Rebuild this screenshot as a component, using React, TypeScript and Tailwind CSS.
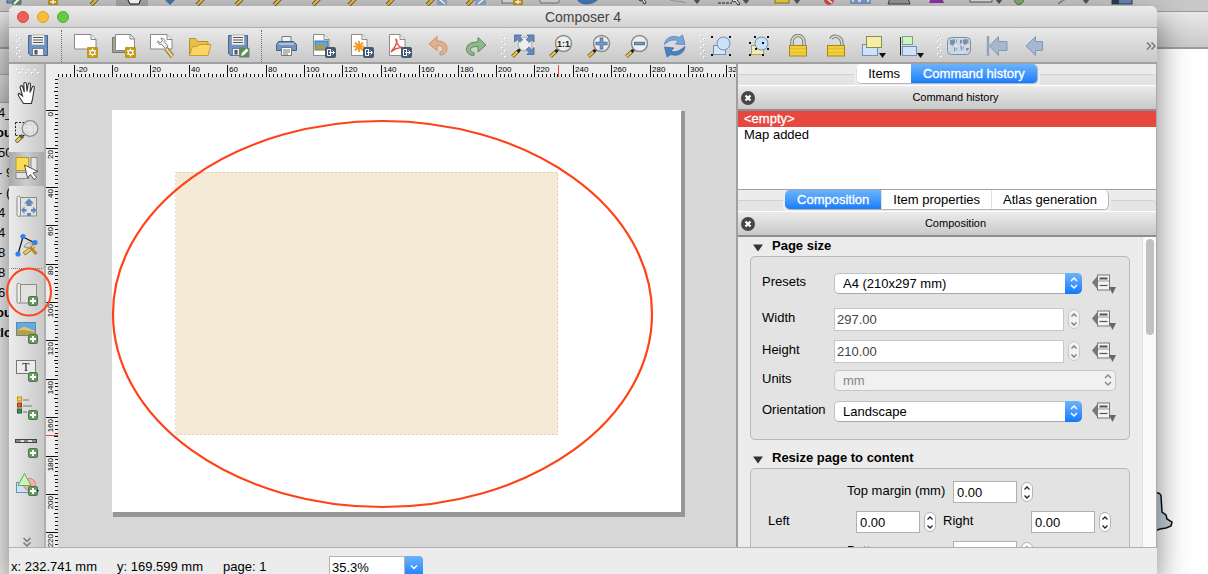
import React, { useState } from "react";

type Kids = { children?: React.ReactNode };

const Svg = ({ children }: Kids) => (
  <svg viewBox="0 0 24 24" className="h-6 w-6 shrink-0" aria-hidden="true">
    {children}
  </svg>
);

/* ---------- shared icon parts ---------- */
const Floppy = () => (
  <g>
    <path d="M2.5 1.5h19v20H4.500l-2-2z" fill="#6f93c3" stroke="#46628c" />
    <rect x="5.500" y="1" width="13" height="10" fill="#f4f4f2" stroke="#8a8a8a" strokeWidth=".6" />
    <path d="M7 3.500h10M7 6h10M7 8.500h10" stroke="#555" />
    <rect x="6.500" y="14.500" width="11" height="7" fill="#f1f1f1" stroke="#666" strokeWidth=".7" />
    <rect x="8.500" y="16" width="3" height="4.500" fill="#3c5a88" />
  </g>
);
const Star = () => (
  <g>
    <rect x="13" y="13" width="11" height="11" rx="1" fill="#c39a17" />
    <path d="M18.500 14.500v8M15 16.500l7 4M22 16.500l-7 4" stroke="#fff" strokeWidth="1.300" />
    <circle cx="18.500" cy="18.500" r="2.200" fill="#c39a17" stroke="#fff" strokeWidth="1.200" />
  </g>
);
const Plus = () => (
  <g>
    <rect x="13.500" y="14.500" width="9" height="9" rx="1.500" fill="#6a9a64" stroke="#4b7749" />
    <path d="M18 16v6M15 19h6" stroke="#fff" strokeWidth="2" />
  </g>
);
const ExportBadge = () => (
  <g>
    <rect x="13" y="13" width="11" height="11" rx="2" fill="#425a73" />
    <path d="M18.500 15.500h-3v6h3M17 18.500h5.500M20.500 16.500l2 2-2 2M18.500 15v7" stroke="#fff" fill="none" />
  </g>
);
const Doc = ({ children }: Kids) => (
  <Svg>
    <path d="M1.500.500h10.500l5 5v16H1.500z" fill="#fff" stroke="#8c8c8c" />
    <path d="M12 .500v5h5" fill="#eee" stroke="#8c8c8c" />
    {children}
    <ExportBadge />
  </Svg>
);
const Handle = () => (
  <g>
    <path d="M1.500 22.500l6.500-6" stroke="#55451a" strokeWidth="3.600" />
    <path d="M1.500 22.500l5-4.600" stroke="#f3c545" strokeWidth="2.200" />
    <path d="M6.500 17.800l3-2.800" stroke="#222" strokeWidth="2.600" />
  </g>
);
const Lens = ({ children }: Kids) => (
  <Svg>
    <Handle />
    <circle cx="14.500" cy="9.500" r="8" fill="#eeeeec" stroke="#8b8b8b" strokeWidth="1.500" />
    {children}
  </Svg>
);

/* ---------- main toolbar icons ---------- */
const Save = () => <Svg><Floppy /></Svg>;
const SaveAs = () => (
  <Svg>
    <Floppy />
    <rect x="13" y="13.500" width="10.500" height="10" rx="1.500" fill="#5d8a5b" />
    <path d="M15 22l1-3 4.500-4.500 2 2L18 21z" fill="#fff" />
  </Svg>
);
const NewPage = () => (
  <Svg>
    <path d="M.500.500h16.500l5 5v9.500H.500z" fill="#fff" stroke="#888" />
    <path d="M17 .500v5h5" fill="#eee" stroke="#888" />
    <Star />
  </Svg>
);
const Duplicate = () => (
  <Svg>
    <path d="M.500 3.500h3v13h14v2H.500z" fill="#a5a398" stroke="#77756d" />
    <path d="M3.500.500h15l4 4v12h-19z" fill="#fff" stroke="#888" />
    <path d="M18 .500v4.500h4.500" fill="#eee" stroke="#888" />
    <Star />
  </Svg>
);
const Manager = () => (
  <Svg>
    <path d="M.500.500h16.500l5 5v9.500H.500z" fill="#fff" stroke="#888" />
    <path d="M17 .500v5h5" fill="#eee" stroke="#888" />
    <path d="M16 14.500l6.500 8" stroke="#8c7131" strokeWidth="4.400" />
    <path d="M16 14.500l6.500 8" stroke="#ecd28a" strokeWidth="2.600" />
    <path d="M15.500 14.500l-4-4c-2 .6-4-1.200-3.800-3.500l2.500 1.800 2.200-2-1.500-2.500c2.800-.4 4.800 1.800 4 4.200l3.300 3.500z" fill="#eee" stroke="#777" strokeWidth=".9" />
  </Svg>
);
const Folder = () => (
  <Svg>
    <path d="M1.500 21V4.500h6l2 3h10.500V21z" fill="#e8bf49" stroke="#b9902b" />
    <path d="M1.500 21.500l3-9h5l1.500-2h12l-3 11z" fill="#fad765" stroke="#c79b30" />
  </Svg>
);
const Printer = () => (
  <Svg>
    <path d="M8 2.500h9v7H8z" fill="#f2f2f2" stroke="#777" />
    <path d="M4.500 7.500h15l3 3v6h-20v-6z" fill="#7195c3" stroke="#44618a" />
    <path d="M5 10h15" stroke="#a9c2e3" strokeWidth="2" />
    <path d="M7.500 13.500h10v8h-10z" fill="#fff" stroke="#777" />
    <path d="M9 16h7M9 18h7M9 20h5" stroke="#777" />
  </Svg>
);
const ImageOut = () => (
  <Doc>
    <rect x="3" y="7" width="13" height="9" fill="#5aa5e8" stroke="#54718d" />
    <path d="M3.500 15.500v-3l5-2 7 3v2z" fill="#b89b2f" />
  </Doc>
);
const SvgOut = () => (
  <Doc>
    <path d="M9 7v11M3.500 12.500h11M5 8.500l8 8M13 8.500l-8 8" stroke="#f69b24" strokeWidth="1.900" />
  </Doc>
);
const PdfOut = () => (
  <Doc>
    <path d="M8 5.500c2 1 .5 6-5 12.500 3-3 7-4.500 12-4.500-3 1-7-4-7-8z" fill="none" stroke="#dc5448" strokeWidth="1.500" />
  </Doc>
);
const Undo = () => (
  <Svg>
    <path d="M3 10l8-7.500v4.500c7 0 10 3 10 7.500 0 4-3 6.500-7 6.500v-3c2 0 3-1.500 3-3.200 0-2-2-3.300-6-3.300v5z" fill="#e2b08c" stroke="#c99372" />
  </Svg>
);
const Redo = () => (
  <Svg>
    <path d="M22 11l-8-7.500v4.500c-8 0-11.500 3-11.500 7.200 0 4 3.500 6.300 7.500 6.300v-3c-2 0-3.500-1-3.500-3 0-2 2.500-3 7.500-3v5.500z" fill="#8fb98a" stroke="#588a58" />
  </Svg>
);
const ZoomFull = () => (
  <Svg>
    <Handle />
    <circle cx="14" cy="10" r="7" fill="#e8e8e8" stroke="#aaa" />
    <path d="M3.500 1h7L8.800 3l3 3-2.500 2.500-3-3-2.800 2.500zM23 1v7l-2.500-2-3 3L15 6l3-3-2-2zM23 20.500h-7l2-2.200-3-3 2.500-2.500 3 3 2.500-2.300z" fill="#648bbd" stroke="#456893" strokeWidth=".8" />
    <circle cx="13.500" cy="10.500" r="4.500" fill="#eee" />
  </Svg>
);
const ZoomActual = () => (
  <Lens>
    <text x="14.500" y="13" textAnchor="middle" fontSize="9" fontWeight="700" fill="#222">1:1</text>
  </Lens>
);
const ZoomIn = () => (
  <Lens>
    <path d="M14.500 3.500v12M8.500 9.500h12" stroke="#46699b" strokeWidth="3.600" />
    <path d="M14.500 4.200v10.600M9.200 9.500h10.600" stroke="#759bcb" strokeWidth="2" />
  </Lens>
);
const ZoomOut = () => (
  <Lens>
    <path d="M9 9.500h11" stroke="#46699b" strokeWidth="3.400" />
    <path d="M9.700 9.500h9.600" stroke="#759bcb" strokeWidth="1.800" />
  </Lens>
);
const Refresh = () => (
  <Svg>
    <path d="M1.500 10.500C2 4 9 .500 16 3.500L19.500 1l2.500 9.500-9.500-.5 3-3C10 5 6.500 6 1.500 10.500z" fill="#7ba6d8" stroke="#5582b8" strokeWidth=".8" />
    <path d="M22 12.500C21.500 19 15 23 8 20.500l-4 2.500-2.500-10 9.500 1-3 3c5 2 9-.500 14-4.500z" fill="#4a7fc0" stroke="#3f6ea8" strokeWidth=".8" />
  </Svg>
);
const Corners = () => (
  <path d="M1 2h2v2H1zM19 2h2v2h-2zM1 20h2v2H1zM19 20h2v2h-2z" fill="#111" />
);
const Group = () => (
  <Svg>
    <rect x="3.500" y="11.500" width="12" height="9" fill="#d3e6f8" stroke="#6d91b4" />
    <circle cx="13.500" cy="9.500" r="6.500" fill="#cbe1f7" stroke="#6d91b4" />
    <Corners />
  </Svg>
);
const Ungroup = () => (
  <Svg>
    <rect x="3.500" y="11.500" width="12" height="9" fill="#f3efaa" stroke="#a8a26a" />
    <circle cx="13.500" cy="9.500" r="6.500" fill="#cbe1f7" stroke="#6d91b4" />
    <path d="M6 2h2v2H6zM19 2h2v2h-2zM1 8h2v2H1zM1 20h2v2H1zM14 20h2v2h-2zM19 14h2v2h-2zM7 14h2v2H7zM14 8h2v2h-2z" fill="#111" />
  </Svg>
);
const Lock = () => (
  <Svg>
    <path d="M6 11V8a6 6.500 0 0 1 12 0v3" fill="none" stroke="#7d7d78" strokeWidth="3.600" />
    <path d="M6 11V8a6 6.500 0 0 1 12 0v3" fill="none" stroke="#d9d9d4" strokeWidth="1.600" />
    <rect x="3.500" y="11.500" width="17" height="10.500" fill="#efcf39" stroke="#ab861b" />
    <path d="M4 14.500h16M4 18.500h16" stroke="#e3bd29" />
  </Svg>
);
const Unlock = () => (
  <Svg>
    <path d="M7 5c1-3 5-3.500 8-1.500 3 2 3 5 3 7.500" fill="none" stroke="#7d7d78" strokeWidth="3.600" />
    <path d="M7 5c1-3 5-3.500 8-1.500 3 2 3 5 3 7.500" fill="none" stroke="#d9d9d4" strokeWidth="1.600" />
    <rect x="3.500" y="11.500" width="17" height="10.500" fill="#efcf39" stroke="#ab861b" />
    <path d="M4 14.500h16M4 18.500h16" stroke="#e3bd29" />
  </Svg>
);
const Raise = () => (
  <Svg>
    <rect x=".500" y="10.500" width="15" height="11" fill="#cfe4f9" stroke="#6d91b4" />
    <rect x="4.500" y="2.500" width="15" height="11" fill="#f3efa5" stroke="#8f8b55" />
    <path d="M17 19h7l-3.500 5z" fill="#111" />
  </Svg>
);
const Align = () => (
  <Svg>
    <path d="M.500 3v18.500" stroke="#222" />
    <rect x="2.500" y="2.500" width="10" height="8" fill="#cdf3c6" stroke="#7ba576" />
    <rect x="2.500" y="12.500" width="14" height="9" fill="#cfe4f9" stroke="#6d91b4" />
    <path d="M17 19h7l-3.500 5z" fill="#111" />
  </Svg>
);
const Atlas = () => (
  <Svg>
    <rect x=".500" y="3.500" width="23" height="17" rx="4" fill="#cad7e5" stroke="#7b8da2" />
    <path d="M3 6l6-1 1 3-3 2-1 3-3-3zM7 13l3 1-1 4-2-1zM13 6l7-1 2 3-4 3-3-2-2 1zM13 11l4 1-1 5-2-1zM19 14l3 0-1 3-2-1z" fill="#7d91a8" />
    <path d="M8.500 4v16M15.500 4v16M1 12h22" stroke="#e6edf3" strokeWidth=".7" />
  </Svg>
);
const First = () => (
  <Svg>
    <path d="M3 2v20" stroke="#8fa3bf" strokeWidth="2.400" />
    <path d="M4.500 12l9-9.500v5H22v9h-8.500v5z" fill="#a5b8d0" stroke="#8297b4" />
  </Svg>
);
const Prev = () => (
  <Svg>
    <path d="M3 12l9.500-9.500v5h7v9h-7v5z" fill="#a5b8d0" stroke="#8297b4" />
  </Svg>
);

/* ---------- side toolbar icons ---------- */
const Hand = () => (
  <Svg>
    <path d="M8.500 22.500L4 15.500C2.200 13 3.500 11.500 5.200 13L7.500 15 5.200 6.500C4.800 4.500 7 4 7.700 5.800L9.300 11 8.800 3c0-2 2.400-2.100 2.600-.200L12 10.500l1.200-7.300c.3-1.800 2.500-1.500 2.300.4L15 11.500l2.200-5.300c.7-1.600 2.500-1 2.100.8L18 15c-.2 3-1.200 5-1.500 7.500z" fill="#fff" stroke="#333" strokeWidth="1.100" />
  </Svg>
);
const ZoomTool = () => (
  <Svg>
    <path d="M.500 3.500h12M.500 3.500v13M.500 16.500h12" stroke="#222" strokeDasharray="2 1.500" fill="none" />
    <path d="M1 23l7-6.500" stroke="#6f5d2a" strokeWidth="3.800" />
    <path d="M1.500 22.500l4-3.700" stroke="#f3cf71" strokeWidth="2.200" />
    <circle cx="15" cy="9.500" r="7.800" fill="#e4e4e2" stroke="#8b8b8b" strokeWidth="1.300" />
    <path d="M11 5h7.500v9H11z" fill="none" stroke="#c4c4c4" strokeDasharray="2 1.500" />
  </Svg>
);
const Select = () => (
  <Svg>
    <rect x="1" y=".500" width="12.500" height="13" fill="#fbdc52" stroke="#b99a25" />
    <rect x="16" y=".500" width="6" height="13" fill="#e5e5e5" stroke="#8b8b8b" />
    <rect x="1" y="15.500" width="12.500" height="6" fill="#e5e5e5" stroke="#8b8b8b" />
    <path d="M9.500 8l13.500 6.500-5 1.500 3.500 4.500-2.500 2-3.500-5-3 3.500z" fill="#fff" stroke="#444" strokeWidth=".9" />
  </Svg>
);
const Sheet = () => (
  <g>
    <path d="M4 2.500h17.500v18.500H4z" fill="#e1e1df" stroke="#8a8a88" />
    <path d="M2 20V2.500C2 .800 5.500.800 5.500 2.500V19c0 3-3.500 3-3.500 1z" fill="#ececea" stroke="#8a8a88" />
  </g>
);
const MoveContent = () => (
  <Svg>
    <Sheet />
    <path d="M14 3.500l5 5h-2.500v2.500h-5V8.500H9zM6 15l3.500-3.500V14h2v2.500h-2V19zM21.500 15L18 11.500V14h-2v2.500h2V19zM12 18h4v3h-4z" fill="#6288b8" />
  </Svg>
);
const Nodes = () => (
  <Svg>
    <path d="M3 21L8 4l12 6" fill="none" stroke="#111" strokeWidth="1.200" />
    <path d="M9 21l10-8" stroke="#8f6e1e" strokeWidth="4" />
    <path d="M9.500 20.500L19 13" stroke="#f7cf48" strokeWidth="2.400" />
    <path d="M13 12l8.500 9" stroke="#b7882b" strokeWidth="3" />
    <path d="M9 14c2-5 6-5 9-3l-3 4z" fill="#d3d3cf" stroke="#777" strokeWidth=".7" />
    <circle cx="3" cy="21" r="2.600" fill="#2f80f2" />
    <circle cx="8" cy="3.500" r="2.600" fill="#2f80f2" />
    <circle cx="20" cy="9.500" r="2.600" fill="#2f80f2" />
  </Svg>
);
const AddMap = () => <Svg><Sheet /><Plus /></Svg>;
const AddImage = () => (
  <Svg>
    <rect x="1.500" y="2.500" width="19" height="13" fill="#5fa9ee" stroke="#6d8595" />
    <path d="M2 15v-4.500l7-4 11 4.500v4z" fill="#b6a047" />
    <path d="M2 10.500l7-4 11 4.500v1l-11-2z" fill="#d9c878" />
    <Plus />
  </Svg>
);
const AddLabel = () => (
  <Svg>
    <rect x="1.500" y="2.500" width="19" height="13" fill="#ebebeb" stroke="#777" />
    <text x="11" y="13" textAnchor="middle" fontSize="12" fontFamily="Liberation Serif, serif" fill="#222">T</text>
    <Plus />
  </Svg>
);
const AddLegend = () => (
  <Svg>
    <rect x="2.500" y="1" width="4" height="4" fill="#fbd43c" stroke="#c28a17" />
    <rect x="2.500" y="7" width="4" height="4" fill="#e25b2b" stroke="#9d3717" />
    <rect x="2.500" y="13" width="4" height="4" fill="#3f9558" stroke="#1e5a30" />
    <path d="M8 4h6M8 10h9M8 16h4" stroke="#999" strokeWidth="1.500" />
    <Plus />
  </Svg>
);
const AddScale = () => (
  <Svg>
    <rect x=".500" y="5.500" width="21" height="3" fill="#ddd" stroke="#444" />
    <path d="M1 7h4.500M9 7h4M17 7h4" stroke="#888" strokeWidth="2" />
    <Plus />
  </Svg>
);
const AddShape = () => (
  <Svg>
    <rect x="1.500" y="10.500" width="13" height="10" fill="#cde2f7" stroke="#6d91b4" />
    <circle cx="14.500" cy="12.500" r="6" fill="#f2b1ab" stroke="#c98682" />
    <path d="M9.500 1.500l6.500 12H3z" fill="#cdf3bd" stroke="#6fa35f" />
    <Plus />
    <path d="M22 18h2l-1 2z" fill="#111" />
  </Svg>
);

type Tool = { name: string; icon: () => React.ReactElement };
const groups: { lead: "grip" | "line"; tools: Tool[] }[] = [
  { lead: "grip", tools: [{ name: "Save project", icon: Save }] },
  {
    lead: "line",
    tools: [
      { name: "New composer", icon: NewPage },
      { name: "Duplicate composer", icon: Duplicate },
      { name: "Composer manager", icon: Manager },
      { name: "Add items from template", icon: Folder },
      { name: "Save as template", icon: SaveAs },
    ],
  },
  {
    lead: "line",
    tools: [
      { name: "Print", icon: Printer },
      { name: "Export as image", icon: ImageOut },
      { name: "Export as SVG", icon: SvgOut },
      { name: "Export as PDF", icon: PdfOut },
      { name: "Undo", icon: Undo },
      { name: "Redo", icon: Redo },
    ],
  },
  {
    lead: "grip",
    tools: [
      { name: "Zoom full", icon: ZoomFull },
      { name: "Zoom to 100%", icon: ZoomActual },
      { name: "Zoom in", icon: ZoomIn },
      { name: "Zoom out", icon: ZoomOut },
      { name: "Refresh view", icon: Refresh },
    ],
  },
  {
    lead: "grip",
    tools: [
      { name: "Group items", icon: Group },
      { name: "Ungroup items", icon: Ungroup },
      { name: "Lock selected items", icon: Lock },
      { name: "Unlock all items", icon: Unlock },
      { name: "Raise selected items", icon: Raise },
      { name: "Align selected items", icon: Align },
    ],
  },
  {
    lead: "grip",
    tools: [
      { name: "Preview atlas", icon: Atlas },
      { name: "First feature", icon: First },
      { name: "Previous feature", icon: Prev },
    ],
  },
];

const viewTools: Tool[] = [
  { name: "Pan", icon: Hand },
  { name: "Zoom", icon: ZoomTool },
  { name: "Select/Move item", icon: Select },
  { name: "Move item content", icon: MoveContent },
  { name: "Edit nodes", icon: Nodes },
];
const addTools: Tool[] = [
  { name: "Add new map", icon: AddMap },
  { name: "Add image", icon: AddImage },
  { name: "Add new label", icon: AddLabel },
  { name: "Add new legend", icon: AddLegend },
  { name: "Add new scalebar", icon: AddScale },
  { name: "Add shape", icon: AddShape },
];

const Grip = () => (
  <svg className="h-6 w-[9px] shrink-0 overflow-visible" aria-hidden="true">
    {[0, 1, 2, 3, 4, 5, 6, 7].map((i) => (
      <g key={i}>
        <rect x={i % 2 ? 9 : 6} y={1 + i * 3} width="2" height="2" fill="#f6f6f6" />
        <rect x={i % 2 ? 10 : 7} y={2 + i * 3} width="1" height="1" fill="#b2b2b2" />
      </g>
    ))}
  </svg>
);

/* ---------- rulers ---------- */
const MM = 1.92;
const ticks = (from: number, to: number) =>
  Array.from({ length: Math.floor((to - from) / 2) + 1 }, (_, i) => from + i * 2);

const TopRuler = () => (
  <svg className="h-[13px] w-full bg-[#ededed]" aria-hidden="true">
    <g shapeRendering="crispEdges" fill="#111">
      {ticks(-28, 324).map((mm) => {
        const h = mm % 20 === 0 ? 12 : mm % 10 === 0 ? 4 : 3;
        return <rect key={mm} x={Math.round(66 + mm * MM)} y={13 - h} width="1" height={h} />;
      })}
      <rect x="512" y="1" width="1" height="12" fill="#f0433a" />
    </g>
    {ticks(-28, 324).filter((mm) => mm % 20 === 0).map((mm) => (
      <text key={mm} x={Math.round(68 + mm * MM)} y="8" fontSize="8" fill="#000">{mm}</text>
    ))}
  </svg>
);

const SideRuler = () => (
  <svg className="h-full w-3 bg-[#ededed]" aria-hidden="true">
    <g shapeRendering="crispEdges" fill="#111">
      {ticks(-16, 260).map((mm) => {
        const w = mm % 20 === 0 ? 12 : mm % 10 === 0 ? 4 : 3;
        return <rect key={mm} x={12 - w} y={Math.round(33 + mm * MM)} width={w} height="1" />;
      })}
      <rect x="0" y="358" width="12" height="1" fill="#f0433a" />
    </g>
    {ticks(0, 260).filter((mm) => mm % 20 === 0).map((mm) => (
      <text
        key={mm}
        textAnchor="end"
        fontSize="8"
        fill="#000"
        transform={`translate(7 ${Math.round(35 + mm * MM)}) rotate(-90)`}
      >
        {mm}
      </text>
    ))}
  </svg>
);

const Canvas = () => (
  <svg className="h-full w-full bg-[#d7d7d7]" role="img" aria-label="Composition page">
    <rect x="55" y="34" width="572" height="406" fill="#969696" />
    <rect x="54" y="33" width="569" height="402" fill="#fff" />
    <rect x="118" y="95" width="382" height="263" fill="#f5ead6" />
    <rect x="117.500" y="95.500" width="382" height="262" fill="none" stroke="#e9a9a0" strokeDasharray="1 3" />
    <ellipse cx="324.500" cy="237" rx="269.500" ry="193" fill="none" stroke="#ff4217" strokeWidth="2.200" />
  </svg>
);

/* ---------- panel controls ---------- */
const Tabs = ({ items, start }: { items: string[]; start: number }) => {
  const [on, setOn] = useState(start);
  return (
    <div className="flex h-[21px] shrink-0 items-start bg-[#ececec]">
      <span className="mt-2.5 h-[11px] flex-1 border-t border-[#d0d0d0] bg-[#e4e4e4]" />
      <div role="tablist" className="mx-0.5 flex h-5 overflow-hidden rounded-[5px] border-b border-r border-[#b5b5b5] bg-white text-[13px]">
        {items.map((t, i) => (
          <button
            key={t}
            role="tab"
            aria-selected={i === on}
            onClick={() => setOn(i)}
            className={
              i === on
                ? "h-5 bg-linear-to-b from-[#6bb3fa] to-[#0a7afe] px-3 leading-5 text-white [-webkit-text-stroke:0.3px_white]"
                : "h-5 border-l border-[#e0e0e0] px-[11px] leading-5 text-black"
            }
          >
            {t}
          </button>
        ))}
      </div>
      <span className="mt-2.5 h-[11px] flex-1 rounded-tr border-t border-[#d0d0d0] bg-[#e4e4e4]" />
    </div>
  );
};

const DockTitle = ({ title }: { title: string }) => (
  <div className="flex h-[26px] shrink-0 items-center border-b-2 border-t border-b-[#8e8e8e] border-t-white bg-linear-to-b from-[#ebebeb] to-[#c9c9c9] pl-[3px]">
    <button aria-label={`Close ${title}`} className="h-3.5 w-3.5 shrink-0">
      <svg viewBox="0 0 14 14" className="h-3.5 w-3.5">
        <circle cx="7" cy="7" r="7" fill="#464646" />
        <path d="M4.500 4.500l5 5M9.500 4.500l-5 5" stroke="#fff" strokeWidth="2.200" />
      </svg>
    </button>
    <h2 className="flex-1 text-center text-[11px] text-black">{title}</h2>
  </div>
);

const Chevrons = ({ color }: { color: string }) => (
  <svg viewBox="0 0 10 14" className="h-3.5 w-2.5" fill="none" stroke={color} strokeWidth="1.500" aria-hidden="true">
    <path d="M2 5l3-3 3 3M2 9l3 3 3-3" />
  </svg>
);

const PopUp = ({ id, options, disabled }: { id: string; options: string[]; disabled?: boolean }) => (
  <div className="relative min-w-0 flex-1">
    <select
      id={id}
      disabled={disabled}
      className={
        disabled
          ? "block h-[21px] w-full appearance-none rounded-[5px] border border-[#c6c6c6] bg-[#f1f1f1] px-2 pb-0.5 text-[13px] text-[#858585] opacity-100"
          : "block h-[21px] w-full appearance-none rounded-[5px] border border-b-[#a8a8a8] border-[#c2c2c2] bg-white px-2 pb-0.5 text-[13px] text-black"
      }
    >
      {options.map((o) => <option key={o}>{o}</option>)}
    </select>
    <span
      className={
        disabled
          ? "pointer-events-none absolute inset-y-0 right-0 flex w-[17px] items-center justify-center"
          : "pointer-events-none absolute inset-y-0 right-0 flex w-[17px] items-center justify-center rounded-r-[5px] bg-linear-to-b from-[#6bb3fa] to-[#0a7afe]"
      }
    >
      <Chevrons color={disabled ? "#8a8a8a" : "#ffffff"} />
    </span>
  </div>
);

const Spinner = ({ name, dim }: { name: string; dim?: boolean }) => (
  <span
    className={
      dim
        ? "ml-1 flex h-5 w-3 shrink-0 flex-col overflow-hidden rounded-md border border-[#c8c8c8] bg-[#f2f2f2] text-[#777]"
        : "ml-1 flex h-5 w-3 shrink-0 flex-col overflow-hidden rounded-md border border-[#b4b4b4] bg-white text-[#222]"
    }
  >
    {["Increase", "Decrease"].map((a, i) => (
      <button key={a} aria-label={`${a} ${name}`} disabled={dim} className="flex flex-1 items-center justify-center">
        <svg viewBox="0 0 8 6" className="h-1.5 w-2" fill="none" stroke="currentColor" strokeWidth="1.300">
          <path d={i ? "M1.500 1.500L4 4l2.500-2.500" : "M1.500 4.500L4 2l2.500 2.500"} />
        </svg>
      </button>
    ))}
  </span>
);

const Override = ({ name }: { name: string }) => (
  <button aria-label={`Data defined override for ${name}`} className="ml-2.5 h-[22px] w-6 shrink-0">
    <svg viewBox="0 0 24 22" className="h-[22px] w-6">
      <path d="M0 10.500l5-6v12z" fill="#777" />
      <rect x="5.500" y="3" width="12" height="15" fill="#f4f4f4" stroke="#777" />
      <path d="M7.500 6.500h8" stroke="#555" strokeWidth="2" />
      <path d="M6 9h11" stroke="#999" />
      <path d="M7.500 13.500h8" stroke="#555" strokeWidth="1.200" />
      <path d="M17 15h7l-3.500 7z" fill="#666" />
    </svg>
  </button>
);

const Row = ({ id, label, gap, children }: Kids & { id: string; label: string; gap: string }) => (
  <div className={`flex h-[22px] items-center ${gap}`}>
    <label htmlFor={id} className="w-[72px] shrink-0 pb-0.5">{label}</label>
    {children}
  </div>
);

const Margin = ({ id, label, wide }: { id: string; label: string; wide?: boolean }) => (
  <div className="flex h-[22px] items-center">
    <label htmlFor={id} className={wide ? "w-[106px] pb-0.5" : "w-[88px] pb-0.5"}>{label}</label>
    <input id={id} defaultValue="0.00" className="h-[22px] w-16 border border-[#b0b0b0] bg-white px-[3px] text-[13px] text-black" />
    <Spinner name={label} />
  </div>
);

const Section = ({ title, children }: Kids & { title: string }) => (
  <section>
    <button className="flex h-[18px] items-center pb-0.5 pl-[3px] font-bold">
      <svg viewBox="0 0 10 8" className="mr-[9px] h-2 w-2.5 translate-y-0.5">
        <path d="M0 .500h10L5 7.500z" fill="#333" />
      </svg>
      {title}
    </button>
    {children}
  </section>
);

/* ---------- the window behind ---------- */
const layerText = ["4_", "ou", "50", "- 9", "- (", "4 -", "4 -", "8 -", "8 -", "6 -", "ou", "tlo"];
const pencils = [94, 200, 239, 277, 316, 352, 390, 430, 470];
const arrows = [697, 746, 797, 999, 1086];

const BackWindow = () => (
  <div className="absolute inset-0 flex flex-col overflow-hidden bg-white" aria-hidden="true">
    <div className="h-3 shrink-0 border-b border-[#9b9b9b] bg-[#c8c8c8]">
      <svg className="h-2 w-full">
        <rect x="7" y="-8" width="14" height="11" fill="#7294bf" stroke="#46628c" />
        <rect x="12" y="-5" width="9" height="10" fill="#5d8a5b" />
        <path d="M14 4l5-5" stroke="#fff" strokeWidth="2" />
        <rect x="48" y="-5" width="10" height="10" fill="#c39a17" />
        <path d="M53-3v7M50 2h6" stroke="#fff" strokeWidth="1.500" />
        <rect x="116" y="0" width="32" height="8" fill="#a9a9a9" />
        <path d="M127-2l3 6h9l2-6z" fill="#fff" stroke="#111" />
        <path d="M165 0h10l-5 5z" fill="#4a74ad" />
        {pencils.map((x) => (
          <g key={x}>
            <path d={`M${x - 3} 5l7-7`} stroke="#6b5520" strokeWidth="4" />
            <path d={`M${x - 3} 5l7-7`} stroke="#efc24c" strokeWidth="2.400" />
          </g>
        ))}
        <path d="M437-4h10v9h-10zM475-4h11v9h-11z" fill="#8fa9cb" />
        <path d="M439-1l6 5M478 4l6-5" stroke="#fff" strokeWidth="1.500" />
        <rect x="502" y="-5" width="14" height="8" fill="#ddd" stroke="#777" />
        <rect x="513" y="-5" width="10" height="10" fill="#c39a17" />
        <path d="M518-3v7M515 2h6" stroke="#fff" strokeWidth="1.500" />
        <rect x="540" y="-5" width="19" height="8" rx="1" fill="#d5d5d5" stroke="#777" />
        <path d="M577 0c4 6 14 6 21 0z" fill="#4478b8" />
        <path d="M638-2l2 3 2-1 2 4 2-1-2-4 3-1z" fill="#fff" stroke="#333" />
        <path d="M670 0c8 2 12 1 16 3" stroke="#999" fill="none" />
        <path d="M718 3h14" stroke="#222" strokeDasharray="3 1" />
        <path d="M731-2l2 4 2-1 3 4 2-1-3-4 3-1z" fill="#fff" stroke="#333" />
        {arrows.map((x) => <path key={x} d={`M${x - 4}-1h8l-4 5z`} fill="#555" />)}
        <rect x="775" y="-5" width="14" height="8" fill="#efcf39" stroke="#8f7a25" />
        <circle cx="829" cy="0" r="5" fill="#d94b45" />
        <path d="M826-2l6 5" stroke="#fff" strokeWidth="1.500" />
        <path d="M851-2v5h19v-5M854 1h4M861 1h6" fill="#d7e6f5" stroke="#5e87ba" strokeWidth="1.400" />
        <path d="M890-2l-2 6h22l-2-6z" fill="#999" stroke="#444" />
        <path d="M931-2l-2 5h15l-2-5z" fill="#8d35a8" />
        <path d="M970-2v4h22v-4" fill="#ddd" stroke="#555" />
        <circle cx="1019" cy="0" r="4.500" fill="#86a96b" stroke="#58784a" />
        <path d="M1058 4l6-6 2 1z" fill="#eee" stroke="#777" />
        <rect x="1112" y="-5" width="20" height="9" fill="#6889b4" stroke="#2c3d55" />
        <rect x="1112" y="-5" width="7" height="9" fill="#2c3d55" />
      </svg>
    </div>
    <div className="h-[37px] shrink-0 border-b-2 border-[#9d9d9d] bg-linear-to-b from-[#e9e9e9] to-[#c9c9c9]" />
    <div className="flex flex-1">
      <div className="w-20 shrink-0 bg-[#f0f0f0] text-[13px] leading-5 text-black">
        <div className="h-[26px] border-b border-[#aaa] bg-linear-to-b from-[#e4e4e4] to-[#cccccc]" />
        <div className="h-7 border-b border-[#aaa] bg-linear-to-b from-[#e4e4e4] to-[#c8c8c8]" />
        {layerText.map((t, i) => (
          <div key={i} className={i === 1 || i > 9 ? "-ml-1 h-5 whitespace-nowrap font-bold" : "-ml-0.5 h-5 whitespace-nowrap"}>
            {t}
          </div>
        ))}
      </div>
      <div className="relative flex-1 bg-white">
        <svg className="absolute right-[33px] top-[443px] h-10 w-5">
          <path d="M0 1c3-1 6 1 6 3l1 16 4 3 1 4 5 3-1 4-5 2-6 1-5 2z" fill="#c8d3e1" stroke="#111" strokeWidth="1.500" />
        </svg>
      </div>
    </div>
  </div>
);

export default function App() {
  return (
    <div className="relative flex h-screen flex-col overflow-hidden font-['Liberation_Sans',Arial,sans-serif] text-[13px] text-black">
      <BackWindow />
      <main className="relative ml-[9px] mr-[51px] mt-1.5 flex min-h-0 flex-1 flex-col rounded-t-md bg-[#ececec] shadow-[0_12px_32px_rgba(0,0,0,0.5)]">
        {/* title bar */}
        <header className="flex h-[22px] shrink-0 items-center rounded-t-md border-b border-[#adadad] bg-linear-to-b from-[#ebebeb] to-[#d3d3d3] px-2">
          <div className="flex flex-1 gap-2">
            <button aria-label="Close window" className="h-3 w-3 rounded-full border border-[#d9483f] bg-[#ee5f57]" />
            <button aria-label="Minimise window" className="h-3 w-3 rounded-full border border-[#dfa023] bg-[#f8bd36]" />
            <button aria-label="Zoom window" className="h-3 w-3 rounded-full border border-[#54ad33] bg-[#65cb41]" />
          </div>
          <h1 className="text-sm text-[#444]">Composer 4</h1>
          <div className="flex-1" />
        </header>

        {/* main toolbar */}
        <div role="toolbar" aria-label="Composer" className="flex h-9 shrink-0 items-center border-b-2 border-[#a0a0a0] bg-linear-to-b from-[#e9e9e9] to-[#c9c9c9] pl-px pt-0.5">
          {groups.map((g, i) => (
            <React.Fragment key={i}>
              {g.lead === "grip" ? (
                <Grip />
              ) : (
                <span className="ml-1 mr-[5px] w-px shrink-0 self-stretch border-l border-dotted border-[#6f6f6f]" />
              )}
              {g.tools.map(({ name, icon: Icon }) => (
                <button key={name} aria-label={name} className="flex h-8 w-[38px] shrink-0 items-center justify-center">
                  <Icon />
                </button>
              ))}
            </React.Fragment>
          ))}
          <button aria-label="More tools" className="ml-auto flex w-3 items-center justify-center">
            <svg viewBox="0 0 10 8" className="h-2 w-2.5" fill="none" stroke="#777" strokeWidth="1.500">
              <path d="M1 .500L4.500 4 1 7.500M5.500.500L9 4 5.500 7.500" />
            </svg>
          </button>
        </div>

        <div className="flex min-h-0 flex-1 border-b border-[#b0b0b0]">
          {/* side toolbar */}
          <div role="toolbar" aria-label="Tools" className="flex w-[37px] shrink-0 flex-col border-r-2 border-[#b0b0b0] bg-linear-to-r from-[#ececec] to-[#c9c9c9]">
            <svg className="h-2.5 w-full shrink-0" aria-hidden="true">
              {[0, 1, 2, 3, 4, 5, 6, 7].map((i) => (
                <g key={i}>
                  <rect x={7 + i * 3} y={i % 2 ? 8 : 5} width="2" height="2" fill="#fafafa" />
                  <rect x={8 + i * 3} y={i % 2 ? 9 : 6} width="1" height="1" fill="#b2b2b2" />
                </g>
              ))}
            </svg>
            {viewTools.map(({ name, icon: Icon }, i) => (
              <button key={name} aria-label={name} aria-pressed={i === 2} className="flex h-[38px] w-full shrink-0 items-center justify-center">
                <span className={i === 2 ? "flex h-[34px] w-full items-center justify-center bg-linear-to-r from-[#a9a9a9] via-[#cdcdcd] to-[#a9a9a9]" : "flex"}>
                  <Icon />
                </span>
              </button>
            ))}
            <span className="mx-0.5 mb-1.5 mt-1 h-0 shrink-0 border-t border-dotted border-[#777]" />
            {addTools.map(({ name, icon: Icon }, i) => (
              <button key={name} aria-label={name} className="relative flex h-[38px] w-full shrink-0 items-center justify-center">
                <Icon />
                {i === 0 && (
                  <svg className="pointer-events-none absolute -left-1 -top-2 z-10 h-[50px] w-12" aria-hidden="true">
                    <ellipse cx="24" cy="25" rx="22" ry="23.500" fill="none" stroke="#ff4217" strokeWidth="2" />
                  </svg>
                )}
              </button>
            ))}
            <button aria-label="More items" className="mt-auto flex h-2.5 items-center justify-center">
              <svg viewBox="0 0 8 10" className="h-2.5 w-2" fill="none" stroke="#777" strokeWidth="1.500">
                <path d="M.500 1L4 4.500 7.500 1M.500 5.500L4 9l3.500-3.500" />
              </svg>
            </button>
          </div>

          {/* rulers and page */}
          <div className="flex min-w-0 flex-1 flex-col">
            <TopRuler />
            <div className="flex min-h-0 flex-1">
              <SideRuler />
              <div className="min-w-0 flex-1"><Canvas /></div>
            </div>
          </div>

          {/* docks */}
          <aside className="flex w-[421px] shrink-0 flex-col border-l-2 border-r border-l-[#a0a0a0] border-r-[#a8a8a8]">
            <Tabs items={["Items", "Command history"]} start={1} />
            <DockTitle title="Command history" />
            <ul className="h-[79px] shrink-0 border-b border-[#a0a0a0] bg-white leading-[15px]">
              <li className="h-4 bg-[#e8473f] pl-1.5 text-white [-webkit-text-stroke:0.3px_white]">&lt;empty&gt;</li>
              <li className="h-4 pl-1.5">Map added</li>
            </ul>
            <Tabs items={["Composition", "Item properties", "Atlas generation"]} start={0} />
            <DockTitle title="Composition" />
            <div className="flex min-h-0 flex-1 overflow-hidden">
              <div className="min-w-0 flex-1 px-3 pt-px">
                <Section title="Page size">
                  <div className="rounded-[5px] border border-[#b8b8b8] bg-[#e3e3e3] pb-[17px] pl-[11px] pr-[13px] pt-[15px]">
                    <Row id="presets" label="Presets" gap="mt-0">
                      <PopUp id="presets" options={["A4 (210x297 mm)"]} />
                      <Override name="Presets" />
                    </Row>
                    <Row id="width" label="Width" gap="mt-3.5">
                      <input id="width" readOnly defaultValue="297.00" className="h-[23px] min-w-0 flex-1 border border-[#c6c6c6] bg-white px-0.5 text-[#444]" />
                      <Spinner name="Width" dim />
                      <span className="w-0.5" />
                      <Override name="Width" />
                    </Row>
                    <Row id="height" label="Height" gap="mt-2.5">
                      <input id="height" readOnly defaultValue="210.00" className="h-[23px] min-w-0 flex-1 border border-[#c6c6c6] bg-white px-0.5 text-[#444]" />
                      <Spinner name="Height" dim />
                      <span className="w-0.5" />
                      <Override name="Height" />
                    </Row>
                    <Row id="units" label="Units" gap="mt-[7px]">
                      <PopUp id="units" options={["mm"]} disabled />
                    </Row>
                    <Row id="orientation" label="Orientation" gap="mt-[9px]">
                      <PopUp id="orientation" options={["Landscape"]} />
                      <Override name="Orientation" />
                    </Row>
                  </div>
                </Section>
                <div className="h-2.5" />
                <Section title="Resize page to content">
                  <div className="flex flex-col gap-2 rounded-[5px] border border-[#b8b8b8] bg-[#e3e3e3] px-[17px] pb-4 pt-3">
                    <div className="flex justify-center"><Margin id="top" label="Top margin (mm)" wide /></div>
                    <div className="flex gap-[7px]">
                      <Margin id="left" label="Left" />
                      <Margin id="right" label="Right" />
                    </div>
                    <div className="flex justify-center"><Margin id="bottom" label="Bottom" wide /></div>
                  </div>
                </Section>
              </div>
              <div className="w-3.5 shrink-0 border-l border-[#e0e0e0] bg-[#fafafa] px-0.5 pt-0.5">
                <div className="mx-auto h-24 w-2 rounded-full bg-[#c1c1c1]" />
              </div>
            </div>
          </aside>
        </div>

        {/* status bar */}
        <footer className="flex h-[26px] shrink-0 items-start overflow-hidden pl-0.5 pt-2">
          <span className="w-[106px] leading-[22px]">x: 232.741 mm</span>
          <span className="w-[106px] leading-[22px]">y: 169.599 mm</span>
          <span className="w-[106px] leading-[22px]">page: 1</span>
          <div className="flex h-[22px]">
            <input aria-label="Zoom level" defaultValue="35.3%" className="w-[76px] border border-[#b4b4b4] bg-white px-0.5 pt-0.5" />
            <button aria-label="Zoom levels" className="flex w-[18px] items-center justify-center rounded-r bg-linear-to-b from-[#6bb3fa] to-[#0a7afe]">
              <svg viewBox="0 0 8 6" className="h-1.5 w-2" fill="none" stroke="#fff" strokeWidth="1.500">
                <path d="M1 1.500L4 4.500l3-3" />
              </svg>
            </button>
          </div>
        </footer>
      </main>
    </div>
  );
}
